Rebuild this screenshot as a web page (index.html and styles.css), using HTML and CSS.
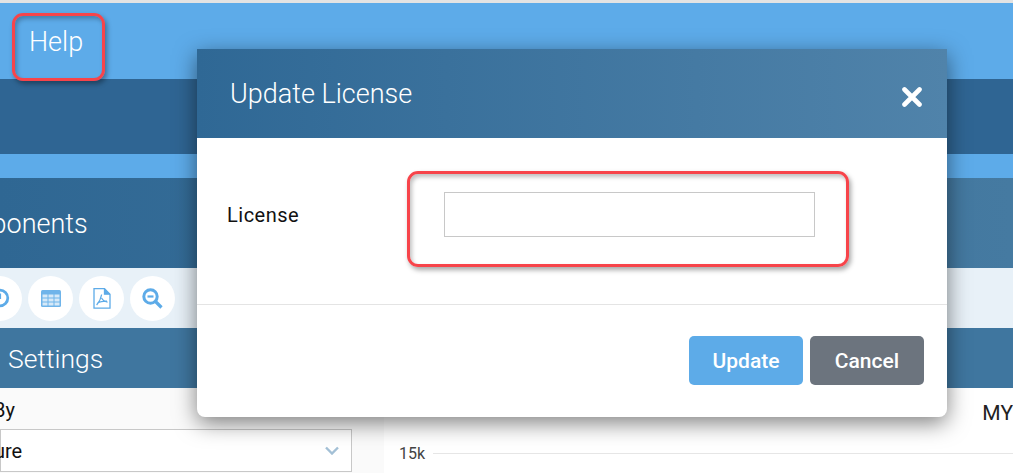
FILE: index.html
```html
<!DOCTYPE html>
<html lang="en">
<head>
  <meta charset="UTF-8" />
  <meta name="viewport" content="width=device-width, initial-scale=1.0">
  <title>Update License</title>
  <link rel="stylesheet" href="styles.css">
</head>
<body>
  <!-- Menu -->
  <div class="menu-bar">
    <span class="menu-item">Help</span>
  </div>
  <div class="nav-band"></div>
  <div class="band-gap"></div>

  <!-- Page head -->
  <div class="section-head">
    <h1 class="components-title">Components</h1>
  </div>
  <div class="toolbar">
    <button class="tool-btn" aria-label="Refresh">
      <svg viewBox="0 0 24 24" width="22" height="22" fill="none" stroke="#5dabe8" stroke-width="3"><circle cx="12" cy="12" r="8.5"/><path d="M12 7v6" stroke-width="2.4"/></svg>
    </button>
    <button class="tool-btn" aria-label="Table">
      <svg viewBox="0 0 20 17" width="20" height="17"><rect width="20" height="17" rx="1.5" fill="#6fb4ea"/><path d="M1.5 4.500h5v3h-5zM7.500 4.500h5v3h-5zM13.500 4.500h5v3h-5zM1.500 8.500h5v3h-5zM7.500 8.500h5v3h-5zM13.500 8.500h5v3h-5zM1.500 12.500h5v3h-5zM7.500 12.500h5v3h-5zM13.500 12.500h5v3h-5z" fill="#d6e9f8"/></svg>
    </button>
    <button class="tool-btn" aria-label="PDF">
      <svg viewBox="0 0 18 21" width="18" height="21" fill="none" stroke="#5dabe8" stroke-width="1.3"><path d="M1 .7h10.500l5.500 5.500v14H1z"/><path d="M11.500.7v5.500H17" fill="#5dabe8"/><path d="M8.600 6.500c-.6 3.500-2.300 7.500-5 10.500M8.600 10c1 2.200 2.800 3.500 6 4.200M4.500 14.800c3-1.300 6-1.800 9.500-1.600" stroke-width="1.2"/></svg>
    </button>
    <button class="tool-btn" aria-label="Zoom out">
      <svg viewBox="0 0 21 21" width="21" height="21" fill="none" stroke="#5dabe8"><circle cx="8.500" cy="8.500" r="6.700" stroke-width="3"/><path d="M5.500 8.500h6" stroke-width="2.200"/><path d="M13.500 13.500l6 6" stroke-width="3.200"/></svg>
    </button>
  </div>
  <div class="settings-head">
    <h2 class="settings-title">Settings</h2>
  </div>

  <!-- Content -->
  <div class="content">
    <div class="settings-panel">
      <div class="field-label">By</div>
      <div class="select-box">
        <span class="select-value">ure</span>
        <svg viewBox="0 0 14 9" width="14" height="9" fill="none" stroke="#a3c0d6" stroke-width="2.400"><path d="M1 1.500l6 6 6-6"/></svg>
      </div>
    </div>
    <div class="chart-panel">
      <div class="chart-title">MY</div>
      <div class="chart-row">
        <span class="chart-tick">15k</span>
        <span class="chart-line"></span>
      </div>
    </div>
  </div>

  <!-- Modal -->
  <div class="modal">
    <div class="modal-header">
      <span class="modal-title">Update License</span>
      <svg class="modal-close" viewBox="0 0 20 20" width="20" height="20" stroke="#fff" stroke-width="4.600" stroke-linecap="round"><path d="M2.500 2.500l15 15M17.500 2.500l-15 15"/></svg>
    </div>
    <div class="modal-body">
      <label class="modal-label">License</label>
      <input class="modal-input" type="text">
    </div>
    <div class="modal-footer">
      <button class="btn btn-update">Update</button>
      <button class="btn btn-cancel">Cancel</button>
    </div>
  </div>

  <!-- Red annotations -->
  <div class="callout callout-help"></div>
  <div class="callout callout-input"></div>
</body>
</html>
```

FILE: styles.css
```css
body {
  margin: 0;
  height: 470px;
  overflow: hidden;
  position: relative;
  border-top: 3px solid #e3e3e3;
  font-family: Roboto, Arial, sans-serif;
  background-color: #fff;
  color: #111;
}

/* Menu */
.menu-bar {
  height: 76px;
  background-color: #5dabe9;
  padding: 2px 0 0 29px;
  display: flex;
  align-items: center;
  box-sizing: border-box;
}

.menu-item {
  font-size: 27px;
  font-weight: 300;
  color: #fff;
}

.nav-band {
  height: 75px;
  background-color: #2f6593;
}

.band-gap {
  height: 24px;
  background-color: #5dabe9;
}

/* Section heads */
.section-head {
  height: 90px;
  background: linear-gradient(90deg, #2f6793, #457aa1);
  display: flex;
  align-items: center;
}

.components-title {
  margin: 2px 0 0 -65px;
  font-size: 27px;
  font-weight: 300;
  color: #fff;
}

.toolbar {
  height: 60px;
  background-color: #e8f1f8;
  display: flex;
  align-items: center;
  gap: 6px;
  margin-left: -23px;
}

.tool-btn {
  width: 45px;
  height: 45px;
  padding: 0;
  border: none;
  border-radius: 50%;
  background-color: #fff;
  display: flex;
  align-items: center;
  justify-content: center;
}

.settings-head {
  height: 60px;
  background-color: #3f769f;
  display: flex;
  align-items: center;
  padding-left: 8px;
}

.settings-title {
  margin: 0;
  font-size: 26.5px;
  font-weight: 300;
  color: #fff;
}

/* Content */
.content {
  display: flex;
  height: 85px;
}

.settings-panel {
  width: 384px;
  background-color: #fafafa;
  padding-top: 11px;
  box-sizing: border-box;
}

.field-label {
  font-size: 20px;
  line-height: 22px;
  margin-left: -7px;
  margin-bottom: 8px;
}

.select-box {
  width: 352px;
  height: 43px;
  box-sizing: border-box;
  border: 1px solid #c8c8c8;
  background-color: #fff;
  display: flex;
  align-items: center;
  justify-content: space-between;
  padding-right: 12px;
}

.select-value {
  font-size: 20px;
  margin-left: -7px;
}

.chart-panel {
  flex: 1;
  padding-left: 15px;
  overflow: hidden;
}

.chart-title {
  font-size: 21px;
  line-height: 24px;
  margin-top: 13px;
  text-align: right;
  color: #222;
}

.chart-row {
  display: flex;
  align-items: center;
  gap: 8px;
  margin-top: 19px;
}

.chart-tick {
  font-size: 16px;
  color: #444;
}

.chart-line {
  flex: 1;
  height: 1px;
  background-color: #e6e6e6;
}

/* Modal */
.modal {
  position: absolute;
  left: 197px;
  top: 46px;
  width: 750px;
  height: 368px;
  background-color: #fff;
  border-radius: 0 0 8px 8px;
  box-shadow: 0 6px 22px rgba(0, 0, 0, 0.5);
  display: flex;
  flex-direction: column;
}

.modal-header {
  height: 89px;
  flex-shrink: 0;
  background: linear-gradient(90deg, #2f6895, #5083aa);
  display: flex;
  align-items: center;
  justify-content: space-between;
  padding: 0 25px 0 33px;
}

.modal-title {
  font-size: 27px;
  font-weight: 300;
  color: #fff;
  margin-top: 1px;
}

.modal-close {
  margin-top: 6px;
}

.modal-body {
  height: 167px;
  box-sizing: border-box;
  border-bottom: 1px solid #e4e4e4;
  display: flex;
  align-items: flex-start;
  padding: 54px 0 0 30px;
}

.modal-label {
  width: 217px;
  font-size: 20px;
  line-height: 47px;
  letter-spacing: 0.5px;
}

.modal-input {
  width: 371px;
  height: 45px;
  box-sizing: border-box;
  border: 1px solid #c8c8c8;
  background-color: #fff;
  padding: 0 8px;
}

.modal-footer {
  display: flex;
  justify-content: flex-end;
  gap: 7px;
  padding: 31px 23px 0 0;
}

.btn {
  width: 114px;
  height: 49px;
  border: none;
  border-radius: 5px;
  font-family: Roboto, Arial, sans-serif;
  font-size: 21px;
  font-weight: 500;
  color: #fff;
}

.btn-update {
  background-color: #5dabe8;
}

.btn-cancel {
  background-color: #6c747e;
}

/* Red annotations */
.callout {
  position: absolute;
  box-sizing: border-box;
  border: 3px solid #f7444a;
  border-radius: 11px;
  box-shadow: 2px 3px 5px rgba(0, 0, 0, 0.35), inset 2px 3px 4px rgba(0, 0, 0, 0.25);
}

.callout-help {
  left: 12px;
  top: 10px;
  width: 93px;
  height: 68px;
}

.callout-input {
  left: 407px;
  top: 168px;
  width: 442px;
  height: 96px;
}
```
